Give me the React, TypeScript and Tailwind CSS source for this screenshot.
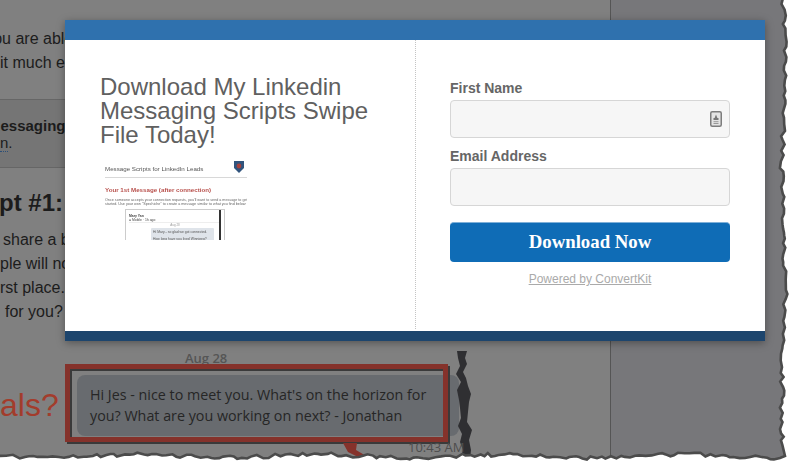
const seeded = (seed: number) => {
  let s = seed;
  return () => {
    s = (s * 16807) % 2147483647;
    return s / 2147483647;
  };
};

// jagged paper edge: down the right side, then back along the bottom
const tornPath = () => {
  const rnd = seeded(4711);
  const pts: string[] = ["M783 -2"];
  for (let y = 4; y < 450; y += 3 + rnd() * 4) {
    const x = 783.5 + Math.sin(y / 37) * 1.6 + (rnd() - 0.5) * 4.6;
    pts.push(`L${x.toFixed(1)} ${y.toFixed(1)}`);
  }
  pts.push("L785 456");
  for (let x = 780; x > -4; x -= 3 + rnd() * 4) {
    const y = 456 + Math.sin(x / 29) * 1.6 + (rnd() - 0.5) * 4;
    pts.push(`L${x.toFixed(1)} ${y.toFixed(1)}`);
  }
  pts.push("L-4 456");
  return pts.join(" ");
};

const TornEdge = () => {
  const d = tornPath();
  return (
    <svg
      className="absolute inset-0 pointer-events-none"
      width="791"
      height="463"
      viewBox="0 0 791 463"
    >
      <path d={`${d} L-4 470 L800 470 L800 -2 Z`} fill="#ffffff" />
      <path d={d} fill="none" stroke="#4b4b4b" strokeWidth="2.6" />
    </svg>
  );
};

const RipStrip = () => (
  <svg
    className="absolute left-[452px] top-[350px]"
    width="24"
    height="112"
    viewBox="0 0 24 112"
  >
    <path
      d="M5 1 L15 1 L13 8 L15 14 L11 22 L14 28 L16 36 L19 44 L17 52 L16 62 L15 72 L20 80 L17 90 L19 100 L18 110 L8 110 L11 100 L8 92 L10 84 L6 76 L9 68 L8 58 L7 50 L5 40 L9 32 L4 24 L8 16 L6 8 Z"
      fill="#2f2f32"
    />
  </svg>
);

const Thumbnail = () => (
  <div className="w-[142px] h-[80px] mt-[13px] ml-[5px] overflow-hidden blur-[0.4px]">
    <div className="flex items-center justify-between h-[18px] border-b border-[#d8d8d8]">
      <span className="text-[6.2px] text-[#555]">Message Scripts for LinkedIn Leads</span>
      <svg width="12" height="14" viewBox="0 0 12 14" className="-mt-[3px] mr-[2px]">
        <path d="M1 1 H11 V8 L6 13 L1 8 Z" fill="#31547d" />
        <circle cx="6" cy="6" r="2.4" fill="#a8413c" />
      </svg>
    </div>
    <p className="mt-[8px] text-[6.2px] leading-[8px] font-bold text-[#b8504c]">
      Your 1st Message (after connection)
    </p>
    <p className="mt-[4px] text-[3.7px] leading-[4px] text-[#666] whitespace-nowrap">
      Once someone accepts your connection requests, you'll want to send a message to get the relationship
      <br />
      started. Use your own "Spechiche" to create a message similar to what you find below:
    </p>
    <div className="relative mt-[3px] ml-[20px] w-[100px] h-[40px] border border-[#ccc] px-[3px] pt-[4px]">
      <div className="border-b border-[#eee] text-[3.4px] leading-[4px] text-[#444]">
        <b>Mary Yan</b>
        <div>● Mobile · 1h ago</div>
      </div>
      <div className="text-center text-[3px] leading-[5px] text-[#999]">Aug 28</div>
      <div className="ml-[22px] w-[63px] h-[20px] bg-[#dfe4ea] rounded-[1px] px-[2px] pt-[1px] text-[3.4px] leading-[7px] text-[#555]">
        <div>Hi Mary - so glad we got connected.</div>
        <div>How long have you lived Winnipeg?</div>
      </div>
      <div className="absolute right-[3px] top-0 w-[2px] h-full bg-[#333]" />
    </div>
  </div>
);

const Field = ({ label, icon }: { label: string; icon?: boolean }) => (
  <div>
    <label className="block text-[14px] leading-[16px] font-bold text-[#666]">{label}</label>
    <div className="mt-[4px] h-[38px] rounded-[4px] border border-[#d6d6d6] bg-[#f6f6f6] flex items-center justify-end pr-[7px]">
      {icon && (
        <svg width="12" height="16" viewBox="0 0 12 16">
          <rect x="0.75" y="0.75" width="10.5" height="14.5" rx="1.5" fill="#e4e4e4" stroke="#7d7d7d" strokeWidth="1.5" />
          <path d="M6 3.5 L7.4 7 H8.5 V9 H3.5 V7 H4.6 Z" fill="#777" />
          <rect x="3.5" y="10.2" width="5" height="1" fill="#999" />
          <rect x="3.5" y="12" width="5" height="1" fill="#999" />
        </svg>
      )}
    </div>
  </div>
);

const Modal = () => (
  <div className="absolute left-[65px] top-[20px] w-[700px] h-[321px] flex flex-col bg-white shadow-[0_2px_8px_rgba(0,0,0,0.35)] font-['Liberation_Sans',sans-serif]">
    <div className="h-[20px] bg-[#2f71ae]" />
    <div className="flex-1 flex">
      <div className="w-[351px] h-[289px] border-r border-dotted border-[#c4c4c4] pl-[35px] pt-[35px]">
        <h2 className="text-[24px] leading-[24px] text-[#606060] w-[290px]">
          Download My Linkedin Messaging Scripts Swipe File Today!
        </h2>
        <Thumbnail />
      </div>
      <div className="flex-1 pl-[34px] pr-[35px] pt-[40px]">
        <div className="flex flex-col gap-[10px]">
          <Field label="First Name" icon />
          <Field label="Email Address" />
        </div>
        <button className="mt-[16px] w-full h-[40px] rounded-[4px] bg-[#0f6cb6] border-t border-[#7fb0d8] text-white text-[18.8px] font-bold font-['Liberation_Serif',serif]">
          Download Now
        </button>
        <p className="mt-[9px] text-center text-[12px] leading-[16px] text-[#aaa] underline">
          Powered by ConvertKit
        </p>
      </div>
    </div>
    <div className="h-[10px] bg-[#1d456d]" />
  </div>
);

const ChatExcerpt = () => (
  <div className="relative w-[393px] h-[78px] ml-[10px]">
    <div className="absolute left-[12px] top-[11px] w-[382px] h-[61px] rounded-[8px] bg-[#686b6f] pl-[13px] pt-[9px] font-['Open_Sans',sans-serif] text-[14.3px] leading-[21px] text-[#262626] whitespace-nowrap">
      <div>Hi Jes - nice to meet you. What's on the horizon for</div>
      <div>you? What are you working on next? - Jonathan</div>
    </div>
    <div className="absolute left-0 top-0 w-[383px] h-[78px] border-[5px] border-[#85322b] shadow-[2px_2px_0_#3a3a3a,inset_2px_2px_0_#3a3a3a]" />
  </div>
);

const Article = () => (
  <div className="w-[611px] h-[463px] shrink-0 bg-[#808080] border-r border-[#555] overflow-hidden text-[#1c1c1c] font-['Liberation_Sans',sans-serif]">
    <div className="pt-[27px] text-[16px] leading-[24px] -ml-[16px] whitespace-nowrap">
      <p>You are able</p>
      <p className="pl-[16px]">it much e</p>
    </div>
    <div className="mt-[24px] h-[69px] bg-[#757575] border-y border-[#666] pt-[17px] text-[15px] leading-[17px] whitespace-nowrap">
      <p className="font-bold -ml-[12px]">Messaging</p>
      <p>
        <span className="border-b border-dotted border-[#2b4f78]">n</span>.
      </p>
    </div>
    <h3 className="mt-[20px] text-[24px] leading-[30px] font-bold -ml-[1px] whitespace-nowrap">pt #1:</h3>
    <div className="mt-[10px] text-[16px] leading-[24px] whitespace-nowrap">
      <p className="pl-[3px]">share a b</p>
      <p>ple will no</p>
      <p>rst place.</p>
      <p className="pl-[5px]">for you?</p>
    </div>
    <p className="mt-[26px] pl-[185px] text-[13px] leading-[16px] font-semibold text-[#555] font-['Open_Sans',sans-serif]">Aug 28</p>
    <div className="flex items-start -mt-[2px]">
      <span className="w-[55px] mt-[23px] text-[32px] leading-[36px] text-[#a33c2c]">als?</span>
      <ChatExcerpt />
    </div>
  </div>
);

export default function App() {
  return (
    <div className="relative w-[791px] h-[463px] overflow-hidden flex bg-[#77777a]">
      <Article />
      <div className="flex-1" />
      <RipStrip />
      <span className="absolute left-[408px] top-[439px] text-[13px] leading-[16px] text-[#4e4e4e] font-['Open_Sans',sans-serif]">10:43 AM</span>
      <svg className="absolute left-[340px] top-[440px]" width="36" height="22" viewBox="0 0 36 22">
        <path d="M3 3 H17 L16 10 L33 20 L24 20 L8 12 Z" fill="#85322b" />
      </svg>
      <Modal />
      <TornEdge />
    </div>
  );
}
